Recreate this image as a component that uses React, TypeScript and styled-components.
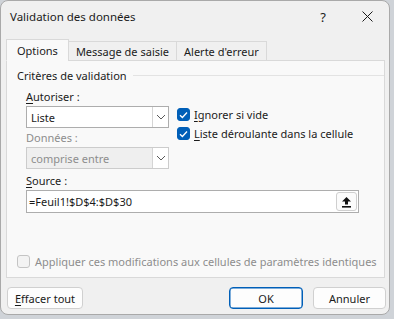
import styled, { createGlobalStyle } from 'styled-components'

const GlobalStyle = createGlobalStyle`
  html, body {
    margin: 0;
    padding: 0;
    background: #cfd3d8;
  }
  body {
    font-family: "Noto Sans", "Open Sans", sans-serif;
    font-size: 11px;
    color: #1b1b1b;
    white-space: nowrap;
  }
`

const Key = styled.span`
  text-decoration: underline;
  text-underline-offset: 2px;
`

const Chevron = () => (
  <svg width="10" height="6" viewBox="0 0 10 6">
    <path d="M1 1 L5 5 L9 1" fill="none" stroke="#5a5a5a" strokeWidth="1" />
  </svg>
)

const Check = () => (
  <svg width="9" height="8" viewBox="0 0 9 8">
    <path d="M1 4.2 L3.4 6.5 L8 1.5" fill="none" stroke="#fff" strokeWidth="1.3" />
  </svg>
)

const UploadIcon = () => (
  <svg width="11" height="12" viewBox="0 0 11 12">
    <path d="M5.5 1 L10 5.6 L7 5.6 L7 8.4 L4 8.4 L4 5.6 L1 5.6 Z" fill="#111" />
    <rect x="1" y="10" width="9" height="1.6" fill="#111" />
  </svg>
)

const CloseIcon = () => (
  <svg width="11" height="11" viewBox="0 0 11 11">
    <path d="M0.5 0.5 L10.5 10.5 M10.5 0.5 L0.5 10.5" stroke="#1b1b1b" strokeWidth="1" />
  </svg>
)

export default function App() {
  return (
    <>
      <GlobalStyle />
      <Page>
        <Dialog>
          <TitleBar>
            <Title>Validation des données</Title>
            <TitleButtons>
              <TitleButton>?</TitleButton>
              <TitleButton><CloseIcon /></TitleButton>
            </TitleButtons>
          </TitleBar>

          <Tabs>
            <Tab active>Options</Tab>
            <Tab>Message de saisie</Tab>
            <Tab>Alerte d'erreur</Tab>
          </Tabs>

          <Panel>
            <GroupHeader>
              <span>Critères de validation</span>
              <GroupLine />
            </GroupHeader>

            <Columns>
              <Column>
                <Label><Key>A</Key>utoriser :</Label>
                <Select>
                  <SelectValue>Liste</SelectValue>
                  <SelectButton><Chevron /></SelectButton>
                </Select>
                <Label disabled>Données :</Label>
                <Select disabled>
                  <SelectValue>comprise entre</SelectValue>
                  <SelectButton><Chevron /></SelectButton>
                </Select>
              </Column>
              <Checks>
                <CheckRow>
                  <Box checked><Check /></Box>
                  <span><Key>I</Key>gnorer si vide</span>
                </CheckRow>
                <CheckRow>
                  <Box checked><Check /></Box>
                  <span><Key>L</Key>iste déroulante dans la cellule</span>
                </CheckRow>
              </Checks>
            </Columns>

            <SourceBlock>
              <Label><Key>S</Key>ource :</Label>
              <SourceInput>
                <span>=Feuil1!$D$4:$D$30</span>
                <PickButton><UploadIcon /></PickButton>
              </SourceInput>
            </SourceBlock>

            <ApplyRow>
              <Box />
              <span>Appliquer ces modifications aux cellules de paramètres identiques</span>
            </ApplyRow>
          </Panel>

          <Footer>
            <Button width={76}><Key>E</Key>ffacer tout</Button>
            <Spacer />
            <Button width={74} primary>OK</Button>
            <Button width={73}>Annuler</Button>
          </Footer>
        </Dialog>
      </Page>
    </>
  )
}

const Page = styled.div`
  width: 394px;
  height: 319px;
  overflow: hidden;
`

const Dialog = styled.div`
  box-sizing: border-box;
  width: 390px;
  height: 315px;
  background: #f0f0f0;
  border: 1px solid #a9a9a9;
  border-radius: 8px;
  display: flex;
  flex-direction: column;
`

const TitleBar = styled.div`
  height: 31px;
  display: flex;
  align-items: center;
  justify-content: space-between;
  padding-left: 9px;
`

const Title = styled.div`
  font-size: 11.5px;
`

const TitleButtons = styled.div`
  display: flex;
  align-items: center;
`

const TitleButton = styled.div`
  width: 44px;
  height: 31px;
  display: flex;
  align-items: center;
  justify-content: center;
  font-size: 13px;
`

const Tabs = styled.div`
  display: flex;
  align-items: flex-end;
  height: 28px;
  padding-left: 5px;
  position: relative;
  z-index: 1;
`

const Tab = styled.div<{ active?: boolean }>`
  box-sizing: border-box;
  height: ${p => (p.active ? 22 : 20)}px;
  padding: 0 ${p => (p.active ? 10 : 7)}px;
  display: flex;
  align-items: center;
  background: ${p => (p.active ? '#f9f9f9' : '#f0f0f0')};
  border: 1px solid #d9d9d9;
  border-bottom: ${p => (p.active ? '1px solid #f9f9f9' : '1px solid #d9d9d9')};
  margin-bottom: -1px;
  margin-right: -1px;
`

const Panel = styled.div`
  box-sizing: border-box;
  margin: 0 4px 0 5px;
  height: 218px;
  background: #f9f9f9;
  border: 1px solid #d9d9d9;
  padding: 6px 0 0 10px;
  display: flex;
  flex-direction: column;
`

const GroupHeader = styled.div`
  display: flex;
  align-items: center;
  gap: 6px;
  height: 16px;
`

const GroupLine = styled.div`
  flex: 1;
  height: 1px;
  background: #e3e3e3;
`

const Columns = styled.div`
  display: flex;
  padding-left: 9px;
  margin-top: 4px;
`

const Column = styled.div`
  display: flex;
  flex-direction: column;
  width: 143px;
`

const Label = styled.div<{ disabled?: boolean }>`
  height: 19px;
  display: flex;
  align-items: center;
  color: ${p => (p.disabled ? '#8d8d8d' : '#1b1b1b')};
`

const Select = styled.div<{ disabled?: boolean }>`
  box-sizing: border-box;
  height: 22px;
  display: flex;
  border: 1px solid ${p => (p.disabled ? '#cccccc' : '#adadad')};
  background: ${p => (p.disabled ? '#efefef' : '#ffffff')};
  color: ${p => (p.disabled ? '#8d8d8d' : '#1b1b1b')};
`

const SelectValue = styled.div`
  flex: 1;
  display: flex;
  align-items: center;
  padding-left: 4px;
`

const SelectButton = styled.div`
  width: 15px;
  border-left: 1px solid #d5d5d5;
  background: #ffffff;
  display: flex;
  align-items: center;
  justify-content: center;
`

const Checks = styled.div`
  display: flex;
  flex-direction: column;
  gap: 6px;
  margin: 21px 0 0 8px;
`

const CheckRow = styled.div`
  display: flex;
  align-items: center;
  gap: 4px;
  height: 13px;
`

const Box = styled.div<{ checked?: boolean }>`
  box-sizing: border-box;
  flex: none;
  width: 13px;
  height: 13px;
  border-radius: 3px;
  display: flex;
  align-items: center;
  justify-content: center;
  background: ${p => (p.checked ? '#005fb8' : '#f3f3f3')};
  border: 1px solid ${p => (p.checked ? '#005fb8' : '#c4c4c4')};
`

const SourceBlock = styled.div`
  display: flex;
  flex-direction: column;
  padding-left: 9px;
  margin-top: 2px;
`

const SourceInput = styled.div`
  box-sizing: border-box;
  width: 333px;
  height: 23px;
  border: 1px solid #adadad;
  background: #ffffff;
  display: flex;
  align-items: center;
  justify-content: space-between;
  padding: 0 1px 0 2px;
`

const PickButton = styled.div`
  box-sizing: border-box;
  width: 21px;
  height: 19px;
  border: 1px solid #cfcfcf;
  border-radius: 3px;
  background: #fbfbfb;
  display: flex;
  align-items: center;
  justify-content: center;
`

const ApplyRow = styled.div`
  display: flex;
  align-items: center;
  gap: 5px;
  margin-top: auto;
  margin-bottom: 8px;
  color: #8d8d8d;
`

const Footer = styled.div`
  display: flex;
  align-items: center;
  gap: 10px;
  padding: 9px 3px 0 6px;
`

const Spacer = styled.div`
  flex: 1;
`

const Button = styled.div<{ width: number; primary?: boolean }>`
  box-sizing: border-box;
  width: ${p => p.width}px;
  height: 22px;
  display: flex;
  align-items: center;
  justify-content: center;
  background: #fdfdfd;
  border-radius: 4px;
  border: 1px solid ${p => (p.primary ? '#005fb8' : '#d0d0d0')};
  box-shadow: ${p => (p.primary ? 'inset 0 0 0 0.5px #005fb8' : 'none')};
`
